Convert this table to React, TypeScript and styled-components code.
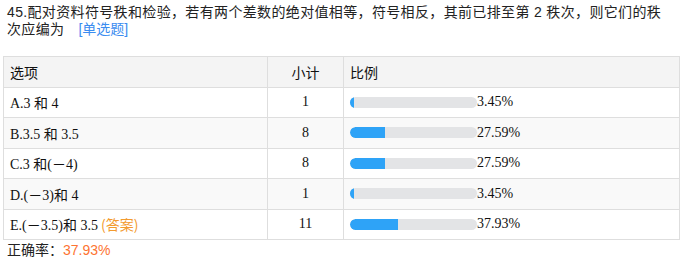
import React from 'react';
import styled, { createGlobalStyle } from 'styled-components';

const GlobalStyle = createGlobalStyle`
  html, body {
    margin: 0;
    padding: 0;
    background: #fff;
  }
`;

const Page = styled.div`
  width: 677px;
  padding: 4px 0 0 3px;
  font-family: 'Liberation Sans', 'Noto Sans CJK SC', sans-serif;
  color: #222;
`;

const Title = styled.div`
  padding: 0 14px 0 4px;
  font-size: 14px;
  line-height: 17px;
  letter-spacing: 0.35px;
  margin-bottom: 18px;
`;

const TypeTag = styled.span`
  margin-left: 14px;
  letter-spacing: 0;
  color: #3b8cf0;
`;

const Table = styled.table`
  width: 100%;
  border-collapse: collapse;
  font-family: 'Liberation Serif', 'Noto Sans CJK SC', serif;
  font-size: 14px;
  color: #111;
`;

const Row = styled.tr<{ $shade?: string }>`
  height: 30.5px;
  background: ${p => p.$shade || '#fff'};
`;

const Cell = styled.td<{ $center?: boolean; $w?: number }>`
  border: 1px solid #dedede;
  padding: 0 6px;
  text-align: ${p => (p.$center ? 'center' : 'left')};
  width: ${p => (p.$w ? `${p.$w}px` : 'auto')};
  vertical-align: middle;
  white-space: nowrap;
`;

const HeadCell = styled(Cell)`
  font-family: 'Noto Sans CJK SC', sans-serif;
  font-weight: normal;
`;

const Answer = styled.span`
  color: #f39b2f;
  font-family: 'Noto Sans CJK SC', sans-serif;
`;

const BarWrap = styled.div`
  display: flex;
  align-items: center;
`;

const Track = styled.div`
  width: 127px;
  height: 11px;
  border-radius: 6px;
  background: #e3e4e6;
  overflow: hidden;
  flex-shrink: 0;
`;

const Fill = styled.div`
  height: 100%;
  background: #2ea3f7;
  border-radius: 6px 0 0 6px;
`;

const Summary = styled.div`
  padding: 0 4px;
  font-size: 14px;
  line-height: 19px;
  font-family: 'Noto Sans CJK SC', sans-serif;
`;

const Rate = styled.span`
  color: #fd7432;
  font-family: 'Liberation Sans', sans-serif;
`;

type Option = { label: string; count: number; pct: number; answer?: boolean };

const options: Option[] = [
  { label: 'A.3 和 4', count: 1, pct: 3.45 },
  { label: 'B.3.5 和 3.5', count: 8, pct: 27.59 },
  { label: 'C.3 和(－4)', count: 8, pct: 27.59 },
  { label: 'D.(－3)和 4', count: 1, pct: 3.45 },
  { label: 'E.(－3.5)和 3.5', count: 11, pct: 37.93, answer: true },
];

export default function App() {
  return (
    <Page>
      <GlobalStyle />
      <Title>
        45.配对资料符号秩和检验，若有两个差数的绝对值相等，符号相反，其前已排至第 2 秩次，则它们的秩次应编为
        <TypeTag>[单选题]</TypeTag>
      </Title>
      <Table>
        <tbody>
          <Row $shade="#f4f4f4">
            <HeadCell as="th" $w={251}>选项</HeadCell>
            <HeadCell as="th" $center $w={63}>小计</HeadCell>
            <HeadCell as="th">比例</HeadCell>
          </Row>
          {options.map((o, i) => (
            <Row key={o.label} $shade={i % 2 === 1 ? '#f9f9f9' : '#fff'}>
              <Cell>
                {o.label}
                {o.answer && <Answer> (答案)</Answer>}
              </Cell>
              <Cell $center>{o.count}</Cell>
              <Cell>
                <BarWrap>
                  <Track>
                    <Fill style={{ width: `${o.pct}%` }} />
                  </Track>
                  {o.pct.toFixed(2)}%
                </BarWrap>
              </Cell>
            </Row>
          ))}
        </tbody>
      </Table>
      <Summary>
        正确率：<Rate>37.93%</Rate>
      </Summary>
    </Page>
  );
}
